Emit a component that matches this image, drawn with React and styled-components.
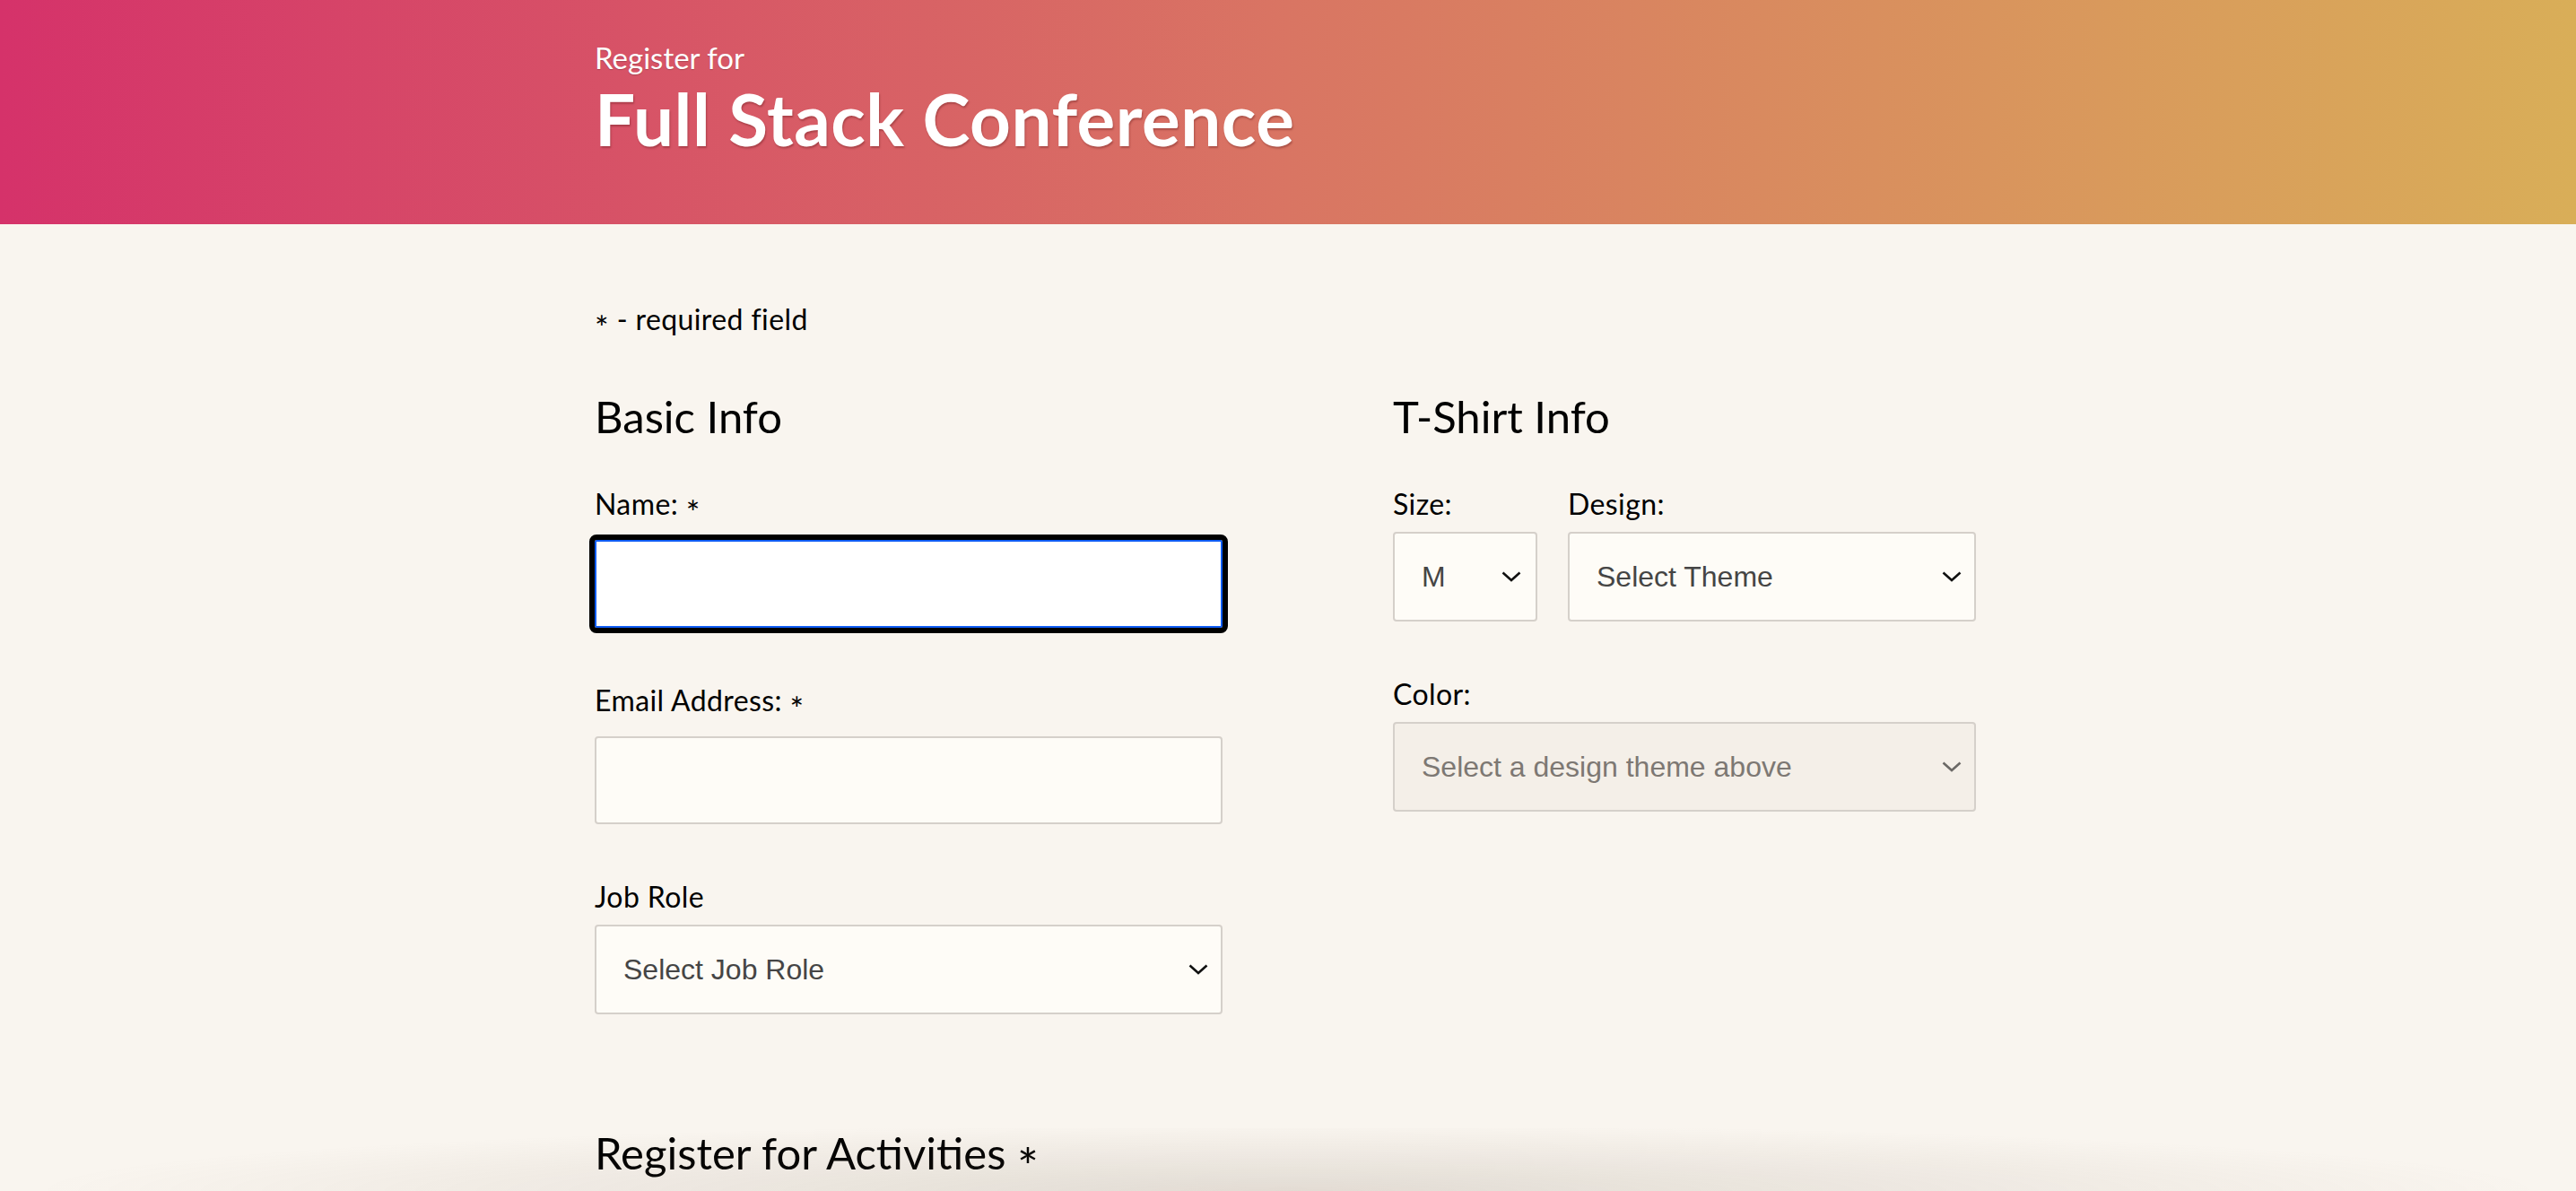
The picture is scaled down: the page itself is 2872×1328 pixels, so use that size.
import styled, { createGlobalStyle } from 'styled-components';

const GlobalStyle = createGlobalStyle`
  * { box-sizing: border-box; }
  body {
    margin: 0;
    background: #f9f5ef;
    font-family: Lato, "Open Sans", sans-serif;
    color: #000;
  }
`;

const Header = styled.header`
  height: 250px;
  padding-top: 44px;
  background: linear-gradient(90deg, #d5326a 0%, #d97563 50%, #d9ae58 100%);
  color: #fff;
`;

const Wrap = styled.div`
  width: 1546px;
  margin: 0 auto;
`;

const Kicker = styled.p`
  margin: 0;
  font-size: 33px;
  line-height: 40px;
  text-shadow: 0 1px 1px rgba(0, 0, 0, 0.2);
`;

const Title = styled.h1`
  margin: 0;
  font-size: 80px;
  line-height: 96px;
  font-weight: 700;
  letter-spacing: 0.5px;
  text-shadow: 1px 2px 2px rgba(90, 20, 20, 0.35);
`;

const Main = styled.main`
  padding-top: 88px;
`;

const Note = styled.p`
  margin: 0;
  font-size: 32px;
  line-height: 36px;
  letter-spacing: 0.4px;
`;

const Star = styled.span`
  display: inline-block;
  font-size: 1.15em;
  line-height: 0;
  position: relative;
  top: 0.3em;
`;

const Columns = styled.div`
  display: grid;
  grid-template-columns: 700px 650px;
  column-gap: 190px;
  margin-top: 61px;
`;

const Section = styled.fieldset`
  border: 0;
  margin: 0;
  padding: 0;
  min-width: 0;
`;

const Heading = styled.h2`
  margin: 0 0 51px;
  font-size: 49px;
  line-height: 58px;
  font-weight: 400;
`;

const Field = styled.div`
  display: flex;
  flex-direction: column;
  flex: ${p => (p.$grow ? 1 : 'none')};
  margin-bottom: 63px;
  min-width: 0;
`;

const Label = styled.label`
  font-size: 32px;
  line-height: 36px;
  letter-spacing: 0.4px;
`;

const TextInput = styled.input`
  margin-top: 22px;
  height: 98px;
  width: 100%;
  border: 2px solid ${p => (p.$focused ? '#0f5cf4' : '#d5d0ca')};
  border-radius: ${p => (p.$focused ? '2px' : '4px')};
  background: ${p => (p.$focused ? '#fff' : '#fefcf7')};
  outline: ${p => (p.$focused ? '6px solid #000' : 'none')};
  font-size: 30px;
  padding: 0 30px;
`;

const SelectBox = styled.div`
  position: relative;
  margin-top: 13px;
  width: ${p => p.$width || '100%'};
`;

const Select = styled.select`
  appearance: none;
  display: block;
  width: 100%;
  height: 100px;
  padding: 0 50px 0 30px;
  border: 2px solid #d5d0ca;
  border-radius: 4px;
  background: ${p => (p.disabled ? '#f4efe8' : '#fefcf7')};
  color: ${p => (p.disabled ? '#7d7873' : '#454545')};
  font-family: "Liberation Sans", Arial, sans-serif;
  font-size: 32px;
  opacity: 1;
`;

const Chevron = styled.svg`
  position: absolute;
  right: ${p => p.$right || 16}px;
  top: 50%;
  margin-top: -6px;
  pointer-events: none;
  opacity: ${p => (p.$dim ? 0.6 : 1)};
`;

const Row = styled.div`
  display: flex;
  gap: 34px;
`;

const Activities = styled.h2`
  margin: 62px 0 0;
  font-size: 49px;
  line-height: 58px;
  font-weight: 400;
`;

const BottomShade = styled.div`
  position: fixed;
  left: 0;
  right: 0;
  bottom: 0;
  height: 70px;
  pointer-events: none;
  background: radial-gradient(ellipse 1400px 75px at 50% 100%, rgba(110, 90, 70, 0.16), rgba(110, 90, 70, 0) 100%);
`;

const Arrow = ({ right, dim }) => (
  <Chevron $right={right} $dim={dim} width="22" height="12" viewBox="0 0 22 12">
    <polyline points="1.5,1.5 11,10 20.5,1.5" fill="none" stroke="#111" strokeWidth="2.6" />
  </Chevron>
);

const Dropdown = ({ width, right, disabled, children }) => (
  <SelectBox $width={width}>
    <Select disabled={disabled}>{children}</Select>
    <Arrow right={right} dim={disabled} />
  </SelectBox>
);

export default function App() {
  return (
    <>
      <GlobalStyle />
      <Header>
        <Wrap>
          <Kicker>Register for</Kicker>
          <Title>Full Stack Conference</Title>
        </Wrap>
      </Header>

      <Main>
        <Wrap>
          <Note><Star>*</Star> - required field</Note>

          <Columns>
            <Section>
              <Heading>Basic Info</Heading>
              <Field>
                <Label htmlFor="name">Name: <Star>*</Star></Label>
                <TextInput id="name" type="text" $focused />
              </Field>
              <Field>
                <Label htmlFor="email">Email Address: <Star>*</Star></Label>
                <TextInput id="email" type="email" />
              </Field>
              <Field>
                <Label htmlFor="title">Job Role</Label>
                <Dropdown>
                  <option>Select Job Role</option>
                </Dropdown>
              </Field>
            </Section>

            <Section>
              <Heading>T-Shirt Info</Heading>
              <Row>
                <Field>
                  <Label>Size:</Label>
                  <Dropdown width="161px" right={18}>
                    <option>M</option>
                  </Dropdown>
                </Field>
                <Field $grow>
                  <Label>Design:</Label>
                  <Dropdown>
                    <option>Select Theme</option>
                  </Dropdown>
                </Field>
              </Row>
              <Field>
                <Label>Color:</Label>
                <Dropdown disabled>
                  <option>Select a design theme above</option>
                </Dropdown>
              </Field>
            </Section>
          </Columns>

          <Activities>Register for Activities <Star>*</Star></Activities>
        </Wrap>
      </Main>
      <BottomShade />
    </>
  );
}
